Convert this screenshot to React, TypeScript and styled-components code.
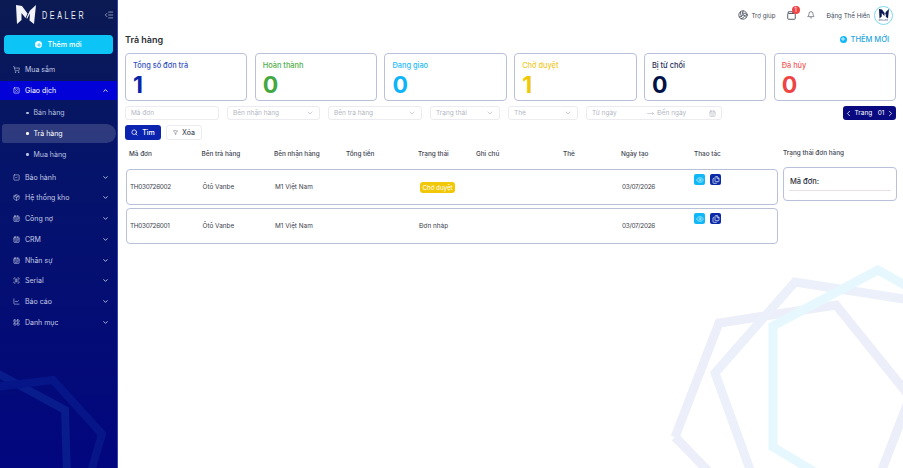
import styled, { createGlobalStyle } from 'styled-components';
import {
  Bell,
  CalendarDays,
  ChevronDown,
  ChevronLeft,
  ChevronRight,
  ChevronUp,
  Eye,
  Files,
  FilterX,
  LayoutGrid,
  LineChart,
  Package,
  Plus,
  ScanBarcode,
  Search,
  ShoppingCart,
  SquareCheck,
  SquarePercent,
  CalendarRange,
  MoveRight,
  IndentDecrease,
  Volleyball,
} from 'lucide-react';

const GlobalStyle = createGlobalStyle`
  html, body {
    margin: 0;
    padding: 0;
    height: 100%;
    background: #fff;
    font-family: Inter, "Noto Sans", sans-serif;
    color: #2a2f3a;
  }
  * { box-sizing: border-box; }
`;

const Page = styled.div`
  position: relative;
  display: flex;
  width: 903px;
  height: 468px;
  overflow: hidden;
  background: #fff;
`;

const Sidebar = styled.aside`
  position: relative;
  width: 118px;
  flex: none;
  background: linear-gradient(180deg, #0b1a52 0%, #05146a 35%, #02067f 100%);
  border-right: 1px solid #3a44ad;
  overflow: hidden;
`;

const SidebarInner = styled.div`
  position: relative;
  z-index: 1;
  display: flex;
  flex-direction: column;
`;

const Brand = styled.div`
  display: flex;
  align-items: center;
  height: 32px;
  padding: 0 3px 3px 16px;
  color: #eef1f8;
`;

const BrandName = styled.span`
  width: 44px;
  margin-left: 6px;
  font-family: "Liberation Sans", sans-serif;
  font-size: 11px;
  letter-spacing: 4px;
  white-space: nowrap;
  transform: scaleX(0.65);
  transform-origin: left center;
`;

const MenuToggle = styled.span`
  display: flex;
  margin-left: auto;
  color: #cdd6ee;
`;

const AddButton = styled.button`
  display: flex;
  align-items: center;
  justify-content: center;
  gap: 5px;
  height: 19px;
  margin: 3px 4px 6px 4px;
  width: 109px;
  border: none;
  border-radius: 4px;
  background: #0cc4f5;
  color: #fff;
  font: 500 7.2px Inter, sans-serif;
`;

const PlusDot = styled.span<{ $bg: string; $fg: string }>`
  display: inline-flex;
  align-items: center;
  justify-content: center;
  width: 7px;
  height: 7px;
  border-radius: 50%;
  background: ${(p) => p.$bg};
  color: ${(p) => p.$fg};
`;

const MenuItem = styled.div<{ $active?: boolean }>`
  display: flex;
  align-items: center;
  height: 19px;
  margin-bottom: 1.7px;
  padding: 0 8px 0 13px;
  gap: 5px;
  font-size: 7px;
  color: ${(p) => (p.$active ? '#fff' : '#c3cbe6')};
  background: ${(p) => (p.$active ? '#0202d8' : 'transparent')};
`;

const MenuArrow = styled.span`
  display: flex;
  margin-left: auto;
`;

const SubItem = styled.div<{ $active?: boolean }>`
  display: flex;
  align-items: center;
  height: 19px;
  margin: 0 1px 1.8px 2px;
  padding-left: 24px;
  gap: 5px;
  font-size: 7px;
  border-radius: 3px 10px 10px 3px;
  color: ${(p) => (p.$active ? '#fff' : '#b9c2e0')};
  background: ${(p) => (p.$active ? 'rgba(255, 255, 255, 0.16)' : 'transparent')};
`;

const SubDot = styled.span`
  width: 2.5px;
  height: 2.5px;
  border-radius: 50%;
  background: currentColor;
`;

const SubGroup = styled.div`
  display: flex;
  flex-direction: column;
  padding-top: 2px;
  padding-bottom: 2px;
`;

const SidebarDecor = styled.svg`
  position: absolute;
  left: 0;
  top: 0;
`;

const PageDecor = styled.svg`
  position: absolute;
  left: 0;
  top: 0;
  pointer-events: none;
`;

const Main = styled.main`
  position: relative;
  z-index: 1;
  flex: 1;
  display: flex;
  flex-direction: column;
  padding: 0 7px;
  min-width: 0;
`;

const TopBar = styled.header`
  display: flex;
  align-items: center;
  justify-content: flex-end;
  height: 30px;
  gap: 12px;
  color: #444b59;
  font-size: 6.2px;
`;

const TopLink = styled.span`
  display: flex;
  align-items: center;
  gap: 3px;
  margin-right: -1px;
`;

const BagWrap = styled.span`
  position: relative;
  display: flex;
  margin-right: -1px;
`;

const Badge = styled.span`
  position: absolute;
  top: -5px;
  right: -4px;
  width: 8px;
  height: 8px;
  border-radius: 50%;
  background: #ef4444;
  color: #fff;
  font-size: 5.5px;
  line-height: 8px;
  text-align: center;
`;

const UserName = styled.span`
  margin-right: -8px;
`;

const Avatar = styled.span`
  display: flex;
  flex-direction: column;
  align-items: center;
  justify-content: center;
  width: 19px;
  height: 19px;
  margin-right: 3px;
  border-radius: 50%;
  border: 1px solid #7fd8f0;
  background: #fff;
`;

const AvatarCaption = styled.span`
  font-size: 2px;
  line-height: 2px;
  letter-spacing: 0.3px;
  color: #0b1a52;
`;

const TitleRow = styled.div`
  display: flex;
  align-items: center;
  justify-content: space-between;
  height: 18px;
  margin-bottom: 5px;
`;

const Title = styled.h1`
  margin: 0;
  font-size: 9px;
  font-weight: 600;
  color: #2c2f36;
`;

const AddLink = styled.span`
  display: flex;
  align-items: center;
  gap: 4px;
  margin-right: 7px;
  font-size: 7.5px;
  font-weight: 500;
  color: #1ea5e0;
`;

const Stats = styled.section`
  display: grid;
  grid-template-columns: repeat(6, 1fr);
  column-gap: 7.4px;
`;

const StatCard = styled.div<{ $color: string }>`
  height: 48px;
  padding: 5.5px 7px;
  border: 1px solid #b9c0d9;
  border-radius: 4px;
  background: #fff;
  color: ${(p) => p.$color};
`;

const StatLabel = styled.div<{ $color: string }>`
  font-size: 7.4px;
  font-weight: 500;
  line-height: 11px;
  color: ${(p) => p.$color};
`;

const StatValue = styled.div`
  font-size: 23px;
  font-weight: 700;
  line-height: 28px;
`;

const Filters = styled.section`
  display: flex;
  gap: 8px;
  margin-top: 5px;
`;

const Field = styled.div<{ $w: number }>`
  display: flex;
  align-items: center;
  justify-content: space-between;
  width: ${(p) => p.$w}px;
  height: 14px;
  padding: 0 5px;
  border: 1px solid #ececf0;
  border-radius: 3px;
  font-size: 6.5px;
  color: #b4b7bf;
  background: #fff;
`;

const DateFrom = styled.span`
  flex: none;
  width: 55px;
`;

const DateTo = styled.span`
  flex: 1;
  margin-left: 3px;
`;

const Pager = styled.div`
  display: flex;
  align-items: center;
  justify-content: space-between;
  width: 53px;
  height: 14px;
  margin-left: auto;
  padding: 0 1px;
  border-radius: 3px;
  background: #0a0a80;
  color: #fff;
  font-size: 6.5px;
`;

const Actions = styled.div`
  display: flex;
  gap: 5px;
  margin-top: 5px;
`;

const SearchButton = styled.button`
  display: flex;
  align-items: center;
  justify-content: center;
  gap: 4px;
  width: 36px;
  height: 15px;
  border: none;
  border-radius: 3px;
  background: #0a24b0;
  color: #fff;
  font: 500 7px Inter, sans-serif;
`;

const ClearButton = styled(SearchButton)`
  border: 1px solid #ececf0;
  background: #fff;
  color: #4a4f5c;
`;

const Content = styled.section`
  display: flex;
  gap: 5px;
  margin-top: 6px;
`;

const TableArea = styled.div`
  width: 653px;
  flex: none;
`;

const rowColumns = '72.5px 72.5px 72px 72px 58px 87px 58px 73px 1fr';

const HeadRow = styled.div`
  display: grid;
  grid-template-columns: ${rowColumns};
  align-items: center;
  height: 16px;
  margin-bottom: 7px;
  padding-left: 4px;
  font-size: 6.4px;
  font-weight: 500;
  color: #3c414d;
`;

const Row = styled.div`
  display: grid;
  grid-template-columns: ${rowColumns};
  align-items: center;
  height: 36px;
  margin-left: 1px;
  margin-bottom: 3px;
  padding-left: 3px;
  border: 1px solid #b9c0d9;
  border-radius: 4px;
  background: #fff;
  font-size: 6.4px;
  color: #3c414d;
`;

const Cell = styled.span`
  min-width: 0;
`;

const NumberCell = styled(Cell)`
  letter-spacing: -0.3px;
`;

const Pill = styled.span`
  display: inline-block;
  height: 11px;
  margin-left: 1px;
  padding: 0 2.5px;
  border-radius: 3px;
  background: #f0c808;
  color: #fff;
  font-size: 6.2px;
  line-height: 11px;
`;

const IconCell = styled.span`
  display: flex;
  align-self: flex-start;
  gap: 5px;
  margin-top: 4px;
  margin-left: -1px;
`;

const IconButton = styled.span<{ $bg: string; $fg: string }>`
  display: flex;
  align-items: center;
  justify-content: center;
  width: 11px;
  height: 11px;
  border-radius: 2px;
  background: ${(p) => p.$bg};
  color: ${(p) => p.$fg};
`;

const SidePanel = styled.div`
  width: 114px;
  flex: none;
`;

const SideHead = styled.div`
  display: flex;
  align-items: center;
  height: 14px;
  margin-bottom: 7px;
  font-size: 6.4px;
  font-weight: 500;
  color: #3c414d;
`;

const SideCard = styled.div`
  height: 34px;
  padding: 8px 5px 0;
  border: 1px solid #b9c0d9;
  border-radius: 4px;
  background: #fff;
`;

const SideLabel = styled.div`
  padding: 0 0 3px 1px;
  border-bottom: 1px solid #eadfe3;
  font-size: 7.5px;
  font-weight: 500;
  line-height: 11px;
  color: #2a2f3a;
`;

const stats = [
  { label: 'Tổng số đơn trả', value: 1, color: '#0a24a8', labelColor: '#3450bd' },
  { label: 'Hoàn thành', value: 0, color: '#43a83f', labelColor: '#4fae4b' },
  { label: 'Đang giao', value: 0, color: '#0db4f8', labelColor: '#1fbaf8' },
  { label: 'Chờ duyệt', value: 1, color: '#f0c808', labelColor: '#f0c92a' },
  { label: 'Bị từ chối', value: 0, color: '#001246', labelColor: '#1c2a58' },
  { label: 'Đã hủy', value: 0, color: '#ef4444', labelColor: '#ef5a5a' },
];

const menuAfter = [
  { label: 'Bảo hành', Icon: SquareCheck },
  { label: 'Hệ thống kho', Icon: Package },
  { label: 'Công nợ', Icon: CalendarRange },
  { label: 'CRM', Icon: CalendarRange },
  { label: 'Nhân sự', Icon: CalendarRange },
  { label: 'Serial', Icon: ScanBarcode },
  { label: 'Báo cáo', Icon: LineChart },
  { label: 'Danh mục', Icon: LayoutGrid },
];

const columns = ['Mã đơn', 'Bên trả hàng', 'Bên nhận hàng', 'Tổng tiền', 'Trạng thái', 'Ghi chú', 'Thẻ', 'Ngày tạo', 'Thao tác'];

const orders = [
  { code: 'TH030726002', status: 'Chờ duyệt', pending: true },
  { code: 'TH030726001', status: 'Đơn nháp', pending: false },
];

const LogoMark = ({ width, color }: { width: number; color: string }) => (
  <svg width={width} height={width * 0.95} viewBox="0 0 20 19">
    <path d="M0 0 L6 1 L11.5 8.5 L9.5 13 L5.5 8 L5.5 15 L1 19 Z" fill={color} />
    <path d="M20 0 L18 19 L13.5 15.5 L14 8.5 L11 14 L10.5 12.5 L14 5.5 Z" fill={color} />
  </svg>
);

const BagIcon = () => (
  <svg width={9} height={9} viewBox="0 0 10 10" fill="none" stroke="currentColor" strokeWidth={1}>
    <rect x={0.8} y={2.8} width={8.4} height={6.4} rx={0.8} />
    <path d="M1 2.8 L1.6 0.8 L6 0.8 L6.6 2.8" />
  </svg>
);

const App = () => (
  <Page>
    <GlobalStyle />
    <PageDecor width={903} height={468} viewBox="0 0 903 468" fill="none" strokeWidth={9}>
      <path d="M675 437 L719 323 L836 305 L910 397 L880 475 M675 437 L712 475" stroke="#ecEEf9" />
      <path d="M910 300 L795 282 L715 373 L752 475" stroke="#ebf0fa" />
      <path d="M910 288 L878 270 L773 326 L773 447 L820 475" stroke="#e6f8fe" />
    </PageDecor>
    <Sidebar>
      <SidebarDecor width={118} height={468} viewBox="0 0 118 468" fill="none" strokeWidth={8}>
        <path d="M-5 372 L65 410 L67 475" stroke="#081c8c" />
        <path d="M-5 387 L53 380 L102 434 L90 475" stroke="#061688" />
      </SidebarDecor>
      <SidebarInner>
        <Brand>
          <LogoMark width={20} color="#f2f4fa" />
          <BrandName>DEALER</BrandName>
          <MenuToggle>
            <IndentDecrease size={10} strokeWidth={1.5} />
          </MenuToggle>
        </Brand>
        <AddButton>
          <PlusDot $bg="#fff" $fg="#0cc4f5">
            <Plus size={6} strokeWidth={3} />
          </PlusDot>
          Thêm mới
        </AddButton>
        <MenuItem>
          <ShoppingCart size={7} />
          Mua sắm
        </MenuItem>
        <MenuItem $active>
          <SquarePercent size={7} />
          Giao dịch
          <MenuArrow>
            <ChevronUp size={7} strokeWidth={3} />
          </MenuArrow>
        </MenuItem>
        <SubGroup>
          <SubItem>
            <SubDot />
            Bán hàng
          </SubItem>
          <SubItem $active>
            <SubDot />
            Trả hàng
          </SubItem>
          <SubItem>
            <SubDot />
            Mua hàng
          </SubItem>
        </SubGroup>
        {menuAfter.map(({ label, Icon }) => (
          <MenuItem key={label}>
            <Icon size={7} />
            {label}
            <MenuArrow>
              <ChevronDown size={7} strokeWidth={3} />
            </MenuArrow>
          </MenuItem>
        ))}
      </SidebarInner>
    </Sidebar>
    <Main>
      <TopBar>
        <TopLink>
          <Volleyball size={10} />
          Trợ giúp
        </TopLink>
        <BagWrap>
          <BagIcon />
          <Badge>1</Badge>
        </BagWrap>
        <Bell size={8} />
        <UserName>Đặng Thế Hiển</UserName>
        <Avatar>
          <LogoMark width={10} color="#0b1a52" />
          <AvatarCaption>DEALER</AvatarCaption>
        </Avatar>
      </TopBar>
      <TitleRow>
        <Title>Trả hàng</Title>
        <AddLink>
          <PlusDot $bg="#0db4f8" $fg="#fff">
            <Plus size={6} strokeWidth={3} />
          </PlusDot>
          THÊM MỚI
        </AddLink>
      </TitleRow>
      <Stats>
        {stats.map((s) => (
          <StatCard key={s.label} $color={s.color}>
            <StatLabel $color={s.labelColor}>{s.label}</StatLabel>
            <StatValue>{s.value}</StatValue>
          </StatCard>
        ))}
      </Stats>
      <Filters>
        <Field $w={94}>Mã đơn</Field>
        <Field $w={93}>
          Bên nhận hàng
          <ChevronDown size={8} />
        </Field>
        <Field $w={94}>
          Bên trả hàng
          <ChevronDown size={8} />
        </Field>
        <Field $w={70}>
          Trạng thái
          <ChevronDown size={8} />
        </Field>
        <Field $w={70}>
          Thẻ
          <ChevronDown size={8} />
        </Field>
        <Field $w={136}>
          <DateFrom>Từ ngày</DateFrom>
          <MoveRight size={7} />
          <DateTo>Đến ngày</DateTo>
          <CalendarDays size={7} />
        </Field>
        <Pager>
          <ChevronLeft size={9} />
          Trang&nbsp;&nbsp;&nbsp;01
          <ChevronRight size={9} />
        </Pager>
      </Filters>
      <Actions>
        <SearchButton>
          <Search size={7} strokeWidth={2.5} />
          Tìm
        </SearchButton>
        <ClearButton>
          <FilterX size={7} />
          Xóa
        </ClearButton>
      </Actions>
      <Content>
        <TableArea>
          <HeadRow>
            {columns.map((c) => (
              <Cell key={c}>{c}</Cell>
            ))}
          </HeadRow>
          {orders.map((o) => (
            <Row key={o.code}>
              <NumberCell>{o.code}</NumberCell>
              <Cell>Ôtô Vanbe</Cell>
              <Cell>M1 Việt Nam</Cell>
              <Cell />
              <Cell>{o.pending ? <Pill>{o.status}</Pill> : o.status}</Cell>
              <Cell />
              <Cell />
              <NumberCell>03/07/2026</NumberCell>
              <IconCell>
                <IconButton $bg="#10b8f8" $fg="#c9f2ff">
                  <Eye size={8} />
                </IconButton>
                <IconButton $bg="#0a2aa8" $fg="#fff">
                  <Files size={8} />
                </IconButton>
              </IconCell>
            </Row>
          ))}
        </TableArea>
        <SidePanel>
          <SideHead>Trạng thái đơn hàng</SideHead>
          <SideCard>
            <SideLabel>Mã đơn:</SideLabel>
          </SideCard>
        </SidePanel>
      </Content>
    </Main>
  </Page>
);

export default App;
